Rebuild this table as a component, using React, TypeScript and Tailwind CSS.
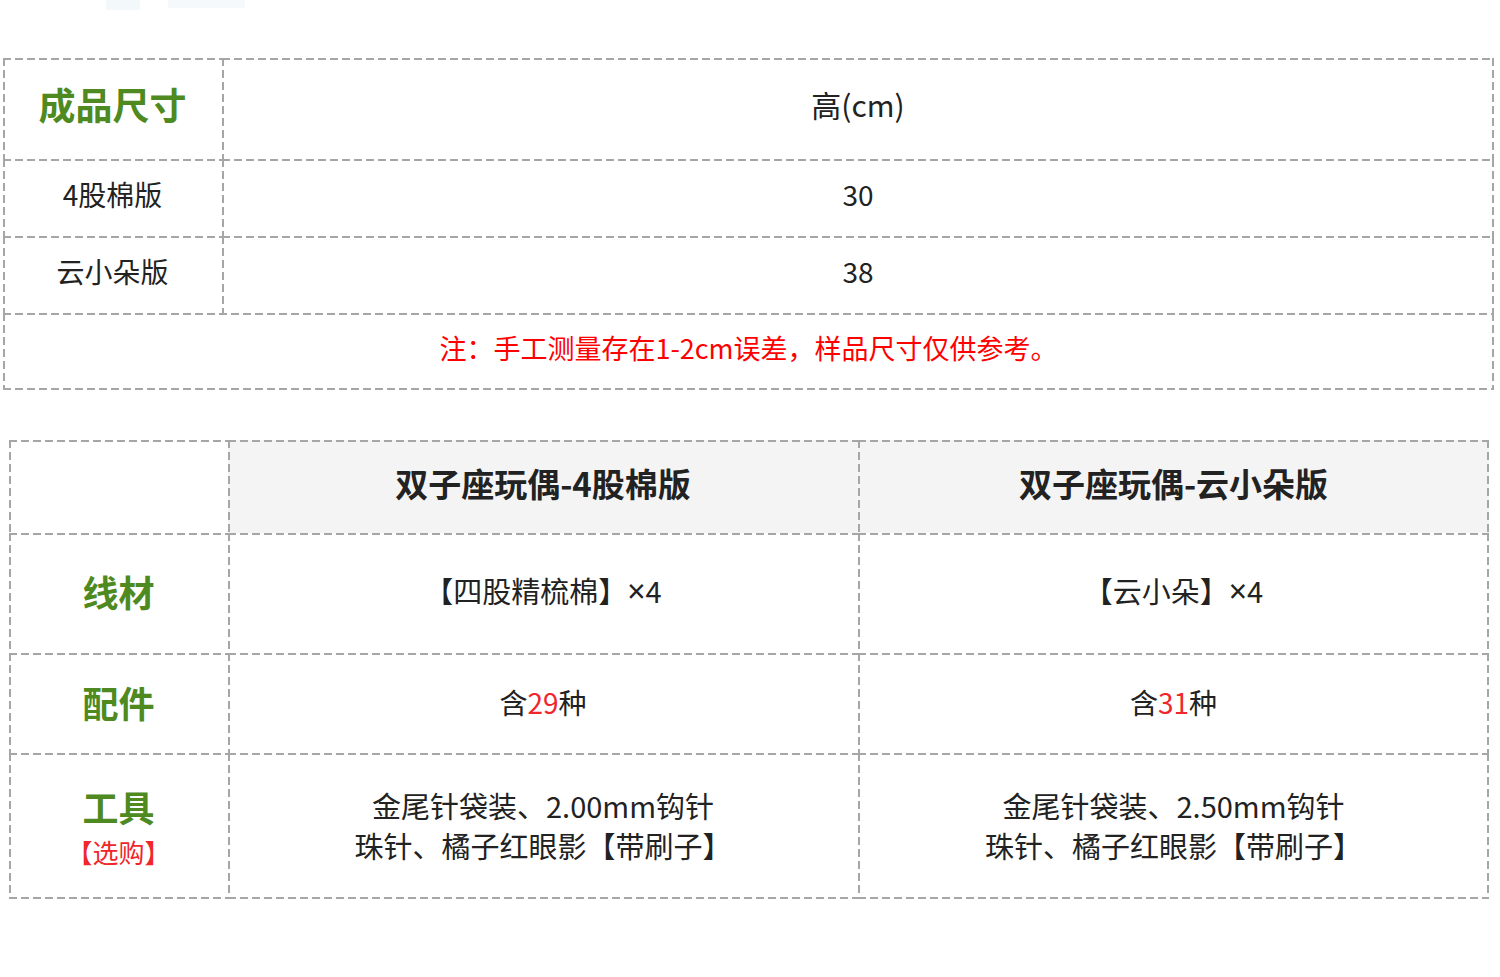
import React from "react";

// Dashed cell edges drawn as gradient layers so the dash/gap ratio matches (8px dash, 4px gap).
const TL =
  "p-0 text-center align-middle bg-no-repeat bg-[image:repeating-linear-gradient(90deg,#a6a6a6_0_8px,transparent_8px_12px),repeating-linear-gradient(180deg,#a6a6a6_0_8px,transparent_8px_12px)] bg-[length:100%_2px,2px_100%] bg-[position:0_0,0_0]";
const TLR =
  "p-0 text-center align-middle bg-no-repeat bg-[image:repeating-linear-gradient(90deg,#a6a6a6_0_8px,transparent_8px_12px),repeating-linear-gradient(180deg,#a6a6a6_0_8px,transparent_8px_12px),repeating-linear-gradient(180deg,#a6a6a6_0_8px,transparent_8px_12px)] bg-[length:100%_2px,2px_100%,2px_100%] bg-[position:0_0,0_0,100%_0]";
const TLB =
  "p-0 text-center align-middle bg-no-repeat bg-[image:repeating-linear-gradient(90deg,#a6a6a6_0_8px,transparent_8px_12px),repeating-linear-gradient(180deg,#a6a6a6_0_8px,transparent_8px_12px),repeating-linear-gradient(90deg,#a6a6a6_0_8px,transparent_8px_12px)] bg-[length:100%_2px,2px_100%,100%_2px] bg-[position:0_0,0_0,0_100%]";
const TLRB =
  "p-0 text-center align-middle bg-no-repeat bg-[image:repeating-linear-gradient(90deg,#a6a6a6_0_8px,transparent_8px_12px),repeating-linear-gradient(180deg,#a6a6a6_0_8px,transparent_8px_12px),repeating-linear-gradient(180deg,#a6a6a6_0_8px,transparent_8px_12px),repeating-linear-gradient(90deg,#a6a6a6_0_8px,transparent_8px_12px)] bg-[length:100%_2px,2px_100%,2px_100%,100%_2px] bg-[position:0_0,0_0,100%_0,0_100%]";

const Times = () => (
  <span className="text-[32px]" style={{ fontFamily: '"Noto Sans", sans-serif' }}>
    ×
  </span>
);

export default function App() {
  return (
    <div
      className="w-[1500px] h-[977px] bg-white text-[#222] overflow-hidden"
      style={{ fontFamily: '"Noto Sans CJK SC", "Noto Sans", sans-serif' }}
    >
      <div className="flex h-[10px] items-start">
        <div className="ml-[106px] w-[34px] h-[10px] bg-[#f3f8fb]" />
        <div className="ml-[28px] w-[77px] h-[8px] bg-[#f5f9fb]" />
      </div>

      <table className="mt-[48px] ml-[3px] w-[1491px] border-collapse table-fixed">
        <colgroup>
          <col className="w-[219px]" />
          <col />
        </colgroup>
        <tbody>
          <tr className="h-[101px]">
            <td className={`${TL} pb-[8px] text-[37px] font-bold text-[#4e8a1f]`}>成品尺寸</td>
            <td className={`${TLR} pb-[8px] text-[30px]`}>高(cm)</td>
          </tr>
          <tr className="h-[77px]">
            <td className={`${TL} pb-[8px] text-[28px]`}>4股棉版</td>
            <td className={`${TLR} pb-[8px] text-[28px]`}>30</td>
          </tr>
          <tr className="h-[77px]">
            <td className={`${TL} pb-[8px] text-[28px]`}>云小朵版</td>
            <td className={`${TLR} pb-[8px] text-[28px]`}>38</td>
          </tr>
          <tr className="h-[77px]">
            <td colSpan={2} className={`${TLRB} pb-[6px] text-[27px] text-[#ff0000]`}>
              注：手工测量存在1-2cm误差，样品尺寸仅供参考。
            </td>
          </tr>
        </tbody>
      </table>

      <table className="mt-[50px] ml-[9px] w-[1480px] border-collapse table-fixed">
        <colgroup>
          <col className="w-[219px]" />
          <col className="w-[630px]" />
          <col />
        </colgroup>
        <tbody>
          <tr className="h-[93px]">
            <td className={TL} />
            <td className={`${TL} pb-[6px] bg-[#f4f4f4] text-[33px] font-bold`}>双子座玩偶-4股棉版</td>
            <td className={`${TLR} pb-[6px] bg-[#f4f4f4] text-[33px] font-bold`}>双子座玩偶-云小朵版</td>
          </tr>
          <tr className="h-[120px]">
            <td className={`${TL} pb-[4px] text-[36px] font-bold text-[#4e8a1f]`}>线材</td>
            <td className={`${TL} pb-[4px] text-[29px]`}>
              【四股精梳棉】<Times />4
            </td>
            <td className={`${TLR} pb-[4px] text-[29px]`}>
              【云小朵】<Times />4
            </td>
          </tr>
          <tr className="h-[100px]">
            <td className={`${TL} pb-[2px] text-[36px] font-bold text-[#4e8a1f]`}>配件</td>
            <td className={`${TL} pb-[2px] text-[28px]`}>
              含<span className="text-[#f0262b]">29</span>种
            </td>
            <td className={`${TLR} pb-[2px] text-[28px]`}>
              含<span className="text-[#f0262b]">31</span>种
            </td>
          </tr>
          <tr className="h-[146px]">
            <td className={TLB}>
              <div className="flex flex-col items-center">
                <span className="text-[36px] font-bold text-[#4e8a1f] leading-[52px]">工具</span>
                <span className="text-[26px] text-[#f0262b] leading-[40px]">【选购】</span>
              </div>
            </td>
            <td className={`${TLB} pb-[2px] text-[29px] leading-[40px]`}>
              <div>金尾针袋装、2.00mm钩针</div>
              <div>珠针、橘子红眼影【带刷子】</div>
            </td>
            <td className={`${TLRB} pb-[2px] text-[29px] leading-[40px]`}>
              <div>金尾针袋装、2.50mm钩针</div>
              <div>珠针、橘子红眼影【带刷子】</div>
            </td>
          </tr>
        </tbody>
      </table>
    </div>
  );
}
